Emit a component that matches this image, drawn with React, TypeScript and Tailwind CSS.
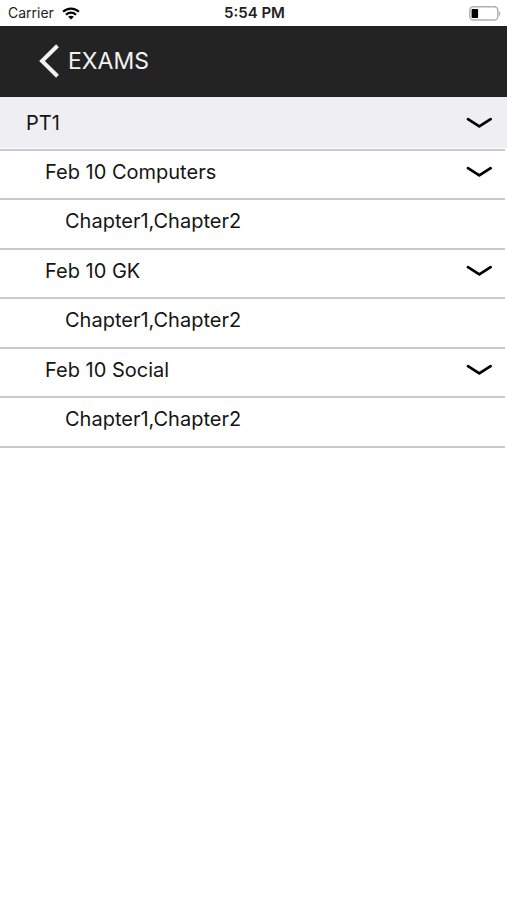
import React, { useState } from 'react';

const exams = [
  {
    name: 'PT1',
    subjects: [
      { title: 'Feb 10 Computers', syllabus: 'Chapter1,Chapter2' },
      { title: 'Feb 10 GK', syllabus: 'Chapter1,Chapter2' },
      { title: 'Feb 10 Social', syllabus: 'Chapter1,Chapter2' },
    ],
  },
];

const ChevronDown: React.FC = () => (
  <svg className="w-[26px] h-3 shrink-0" viewBox="0 0 26 12" fill="none" aria-hidden="true">
    <path d="M2 2.2 L13.3 9.4 L24.6 2.2" stroke="#000" strokeWidth="2.7" strokeLinecap="round" strokeLinejoin="round" />
  </svg>
);

const StatusBar: React.FC = () => (
  <div className="grid grid-cols-3 items-center h-[26px] pl-2 pr-[6px] text-[#222]">
    <div className="flex items-center gap-2 text-sm">
      <span>Carrier</span>
      <svg className="w-[18px] h-[13px]" viewBox="0 0 18 13" fill="none" aria-hidden="true">
        <path d="M1.1 4.8 C5.4 0.5 12.6 0.5 16.9 4.8" stroke="#000" strokeWidth="2.2" />
        <path d="M4 7.8 C6.8 5 11.2 5 14 7.8" stroke="#000" strokeWidth="2.2" />
        <path d="M9 12.6 L6.1 9.8 C7.7 8.3 10.3 8.3 11.9 9.8 Z" fill="#000" />
      </svg>
    </div>
    <div className="text-center text-[15px] font-semibold whitespace-nowrap">5:54 PM</div>
    <div className="flex justify-end">
      <svg className="w-8 h-[15px]" viewBox="0 0 32 15" fill="none" aria-hidden="true">
        <rect x="0.8" y="0.8" width="28" height="13.2" rx="3.6" stroke="#b0b0b0" strokeWidth="1.5" />
        <rect x="2.6" y="3" width="6.5" height="9" rx="0.8" fill="#000" />
        <path d="M30.2 5.2 C31.8 6 31.8 9 30.2 9.8 Z" fill="#a0a0a0" />
      </svg>
    </div>
  </div>
);

const App: React.FC = () => {
  const [closed, setClosed] = useState<string[]>([]);

  const toggle = (key: string) => {
    setClosed((prev) => (prev.includes(key) ? prev.filter((k) => k !== key) : [...prev, key]));
  };

  return (
    <div className="min-h-screen bg-white text-[#151515] font-['Inter','Liberation_Sans',sans-serif]">
      <StatusBar />

      {/* Header */}
      <header className="flex items-center h-[71px] pl-[39px] bg-[#232323] text-[#f2f2f2]">
        <button type="button" aria-label="Back" className="mr-2 pb-[2px]">
          <svg className="w-[21px] h-[34px]" viewBox="0 0 21 34" fill="none" aria-hidden="true">
            <path d="M18.5 1.8 L3 17 L18.5 32.2" stroke="currentColor" strokeWidth="4" />
          </svg>
        </button>
        <h1 className="text-[23px]">EXAMS</h1>
      </header>

      {/* Exam list */}
      <main className="text-xl">
        {exams.map((exam) => (
          <section key={exam.name}>
            <div className="bg-[#efeef3]">
              <button
                type="button"
                onClick={() => toggle(exam.name)}
                aria-expanded={!closed.includes(exam.name)}
                className="flex items-center justify-between w-full h-[51px] pl-[26px] pr-[15px]"
              >
                {exam.name}
                <ChevronDown />
              </button>
            </div>
            <div className="mt-px mr-[2px] border-b-2 border-[#cbcbcb]" />

            {!closed.includes(exam.name) &&
              exam.subjects.map((subject) => (
                <div key={subject.title} className="mr-[2px]">
                  <button
                    type="button"
                    onClick={() => toggle(subject.title)}
                    aria-expanded={!closed.includes(subject.title)}
                    className="flex items-center justify-between w-full h-[49px] pl-[45px] pr-[13px] pb-[6px] border-b-2 border-[#cbcbcb]"
                  >
                    {subject.title}
                    <ChevronDown />
                  </button>
                  {!closed.includes(subject.title) && (
                    <p className="flex items-center h-[50px] pl-[65px] pb-[6px] border-b-2 border-[#cbcbcb]">
                      {subject.syllabus}
                    </p>
                  )}
                </div>
              ))}
          </section>
        ))}
      </main>
    </div>
  );
};

export default App;
